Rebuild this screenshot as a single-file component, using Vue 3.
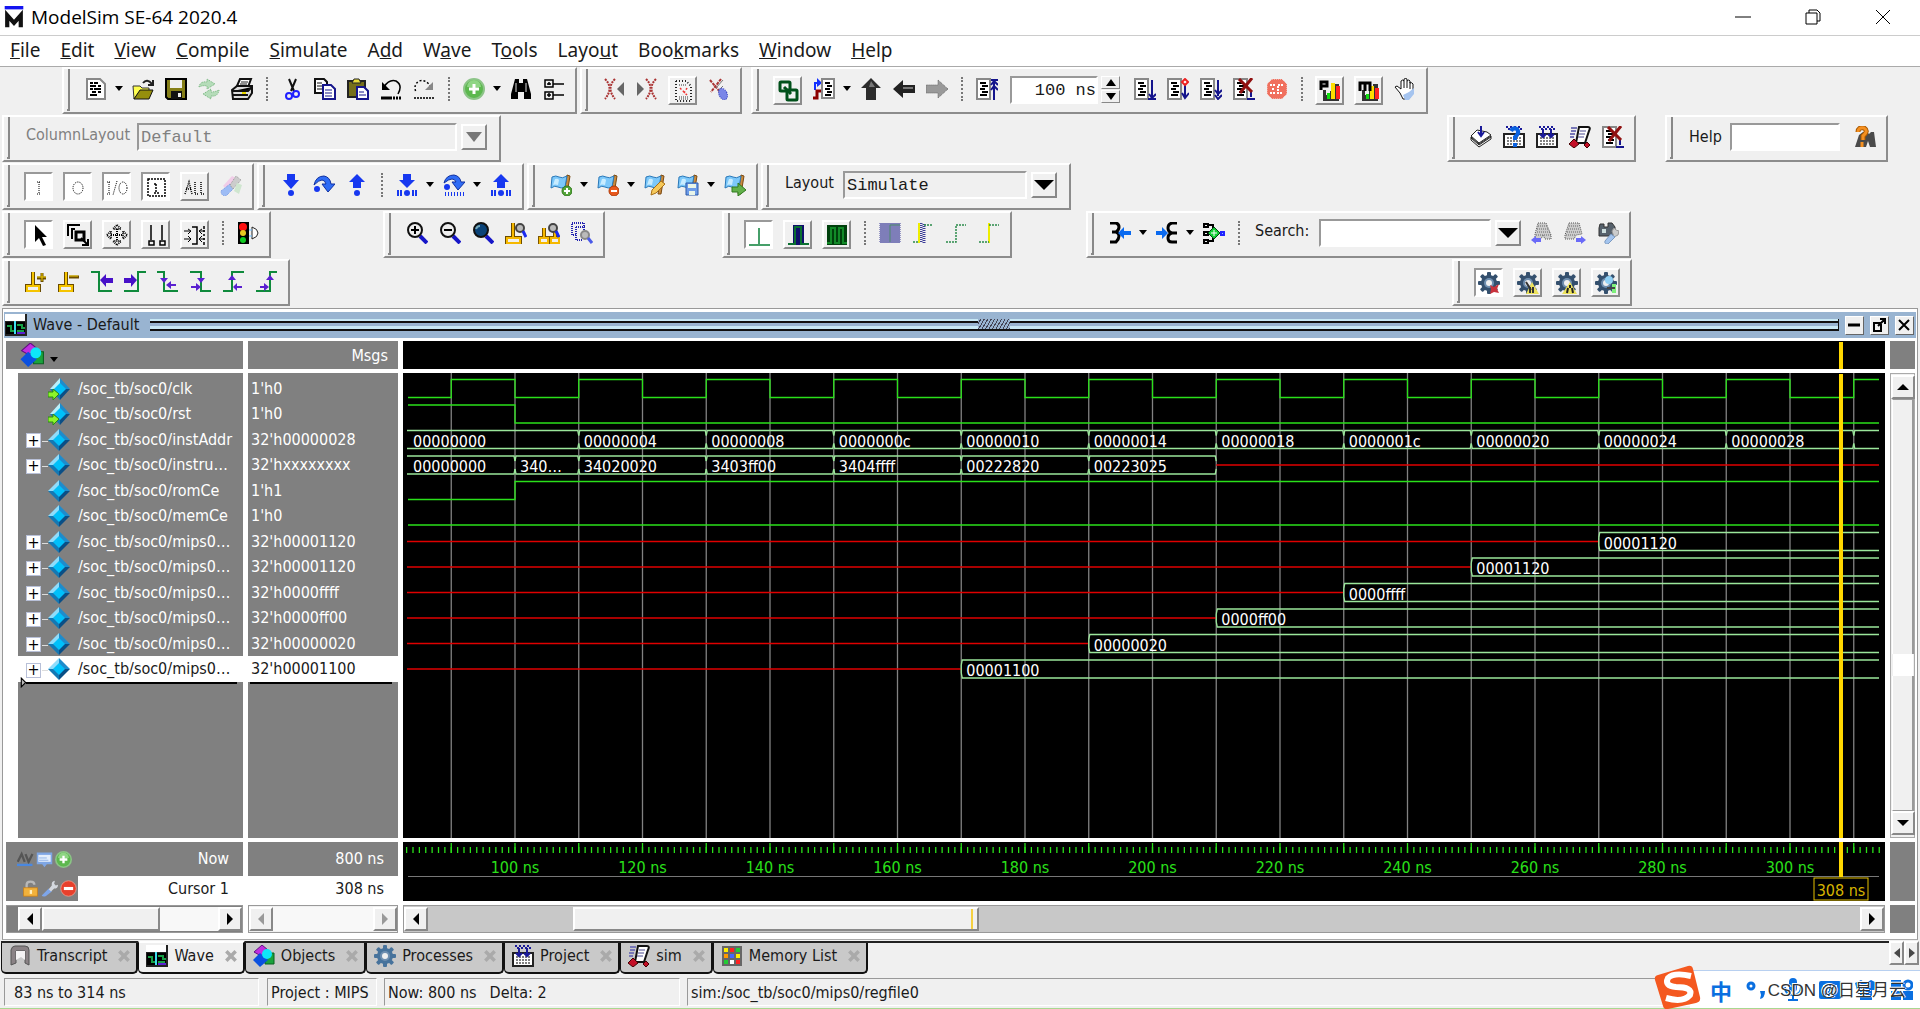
<script setup>
const K = 'fill="none" stroke="#000" stroke-width="2"'
const K1 = 'fill="none" stroke="#000"'

const gear = (fill) =>
  `<g transform="translate(11 11)"><g fill="${fill}">` +
  [0, 45, 90, 135].map((a) => `<rect x="-2" y="-11" width="4" height="22" rx="1" transform="rotate(${a})"/>`).join('') +
  `<circle r="8"/></g><circle r="5" fill="#6f8fb0"/><circle r="3" fill="#f0f0f0"/></g>`
const list = '<path d="M1 1h13v20H1z" fill="#fff" stroke="#888" stroke-width="2"/><path d="M4 5h6M6 8h6M4 11h5M6 14h6M4 17h7" stroke="#000" stroke-width="2"/>'
const flag =
  '<path d="M17 1l3 1-3 18h-3z" fill="#c98a3c" stroke="#7a4a12"/><path d="M2 3q4-2 7 0t8-1l-2 11q-4 2-7 0t-7 1z" fill="#7cc8fa" stroke="#2a78b8"/><path d="M5 5q3-1 4 1l-1 5q-3-1-5 0z" fill="#c8ecff"/>'
const brick = '<path d="M1 8h20v13H1z" fill="#fff" stroke="#222" stroke-width="2"/><path d="M4 12h14M4 15h14M4 18h14" stroke="#000" stroke-dasharray="2 1"/>'
const rain = '<path d="M3 1h16M5 3h14" stroke="#1a1a99" stroke-width="2" stroke-dasharray="2 2"/>'
const lens = (fill, mark) =>
  `<path d="M14 14l7 7" stroke="#1616c8" stroke-width="4"/><circle cx="9" cy="8" r="7" fill="${fill}" stroke="#111" stroke-width="2"/>${mark}`
const stand = (x) => `<path d="M${x + 6} 2v14M${x} 16h12v5h-12z" fill="none" stroke="#6b4c00" stroke-width="4"/><path d="M${x + 6} 2v14M${x} 16h12v5h-12z" fill="#f0f0f0" stroke="#f5c400" stroke-width="2"/>`
const glass = '<circle cx="15" cy="6" r="4" fill="#bbb" stroke="#444" stroke-width="2"/><path d="M18 9l3 6" stroke="#1a2af0" stroke-width="3"/>'
const binoc = '<path d="M5 1h4v4h4V1h4l4 15v5h-7v-7h-6v7H1v-5z"'
const cog = gear('#34506e')

const icons = {
  new: '<path d="M2 1h13l5 5v15H2z" fill="#fff" stroke="#888" stroke-width="2"/><path d="M5 5h3m1 0h4M5 8h6m2 0h3M5 11h3m1 0h7M7 14h4m2 0h3M5 17h7" stroke="#000" stroke-width="2"/>',
  open: '<path d="M1 8h7l2 2h7v3H8l-6 8z" fill="#ffff50" stroke="#333"/><path d="M2 21l6-9h13l-4 9z" fill="#958f0c" stroke="#111"/><path d="M11 5q4-5 9 1M21 2v5h-5" fill="none" stroke="#222" stroke-width="2"/>',
  save: '<path d="M1 1h20v20H3l-2-2z" fill="#857f18" stroke="#000" stroke-width="2"/><path d="M5 2h12v8H5z" fill="#efefef"/><path d="M6 13h11v8H6z" fill="#111"/><path d="M13 15h3v4h-3z" fill="#eee"/>',
  refresh: '<g fill="#b5dcb9" stroke="#6fb277" stroke-dasharray="1 1"><path d="M1 9q1-6 8-5V1l8 5-8 5V8q-4-1-8 1z"/><path d="M21 12q-1 7-8 6v3l-8-5 8-5v3q4 0 8-2z"/></g>',
  print: '<path d="M6 8l3-7h11l-3 8z" fill="#fff" stroke="#111" stroke-width="2"/><path d="M10 4h7M9 6h7" stroke="#222"/><path d="M1 12l5-4h15v7l-4 6H2z" fill="#ddd" stroke="#111" stroke-width="2"/><path d="M2 13h15l4-4M2 17h15" stroke="#111" stroke-width="2"/><path d="M11 14h4v2h-4z" fill="#e8d800"/>',
  cut: '<path d="M8 1l5 12M15 1l-5 12" stroke="#111" stroke-width="2"/><g fill="none" stroke="#2020ff" stroke-width="2"><circle cx="8" cy="18" r="3"/><circle cx="15" cy="16" r="3"/></g>',
  copy: '<path d="M1 1h9l3 3v11H1z" fill="#fff" stroke="#111" stroke-width="2"/><path d="M3 5h5M3 8h6M3 11h6" stroke="#111"/><path d="M9 7h8l4 4v10H9z" fill="#fff" stroke="#16168c" stroke-width="2"/><path d="M11 12h7M11 15h7M11 18h7" stroke="#16168c"/>',
  paste: '<path d="M1 3h17v16H1z" fill="#756f1c" stroke="#222" stroke-width="2"/><path d="M5 5l2-4h5l2 4z" fill="#e6dc3c" stroke="#222"/><path d="M10 9h7l4 4v8H10z" fill="#fff" stroke="#16168c" stroke-width="2"/><path d="M12 14h5M12 17h7" stroke="#16168c"/>',
  undo: `<path d="M4 9q5-8 12-6 7 4 2 13" ${K1} stroke-width="1.5"/><path d="M2 4v8h8z"/><path d="M1 20h11" stroke="#000" stroke-width="3"/><path d="M13 20h8" stroke="#000" stroke-width="3" stroke-dasharray="2 1"/>`,
  redo: `<path d="M18 9q-5-8-12-6-6 4-3 11" ${K1} stroke-width="1.5" stroke-dasharray="2 2"/><path d="M20 4v8h-8z" fill="#888"/><path d="M1 20h20" stroke="#333" stroke-width="2" stroke-dasharray="2 1"/>`,
  add: '<circle cx="11" cy="11" r="10" fill="#5cb84e" stroke="#8cc487" stroke-width="2"/><path d="M4 9a7 7 0 0 1 14 0z" fill="#8fd684"/><path d="M11 6v10M6 11h10" stroke="#fff" stroke-width="3"/>',
  find: `${binoc}/><path d="M6 5v9M16 5v9" stroke="#ddd"/>`,
  expand: `<path d="M2 2h8v7H2zM2 14h8v7H2zM10 6h11M10 17h11M4 6h4M6 4v3M4 17h4M6 15v4" ${K1} stroke-width="1.5"/>`,
  xleft: '<path d="M2 1q9 9 0 20M12 1q-9 9 0 20" fill="none" stroke="#a33" stroke-width="2" stroke-dasharray="2 1"/><path d="M21 4v14l-7-7z" fill="#666"/>',
  xright: '<path d="M10 1q9 9 0 20M20 1q-9 9 0 20" fill="none" stroke="#a33" stroke-width="2" stroke-dasharray="2 1"/><path d="M1 4v14l7-7z" fill="#666"/>',
  ghostdoc: '<path d="M4 1h10l5 5v15H4z" fill="#f4f4f4" stroke="#222" stroke-width="2" stroke-dasharray="1 2"/><path d="M7 5h7M7 17h9M7 19h9" stroke="#333" stroke-dasharray="1 1"/><path d="M8 8l7 7M15 8l-4 7" stroke="#e33" stroke-dasharray="2 2" stroke-width="1.5"/>',
  brushx: '<path d="M2 2l10 12M13 1L3 14" stroke="#a33" stroke-width="2" stroke-dasharray="3 1"/><path d="M8 10l7-8M10 13l5-5" stroke="#777"/><ellipse cx="15" cy="16" rx="4" ry="6" fill="#7a86e8" stroke="#3440c0" stroke-dasharray="1 1" transform="rotate(-25 15 16)"/>',
  link: '<g fill="none" stroke="#00501a" stroke-width="3"><rect x="3" y="2" width="10" height="9" rx="1"/><rect x="10" y="10" width="10" height="10" rx="1"/><path d="M7 7l7 7"/></g>',
  jump: '<path d="M2 12V5h3" fill="none" stroke="#1430ff" stroke-width="2"/><path d="M4 0v9l5-4z" fill="#1430ff"/><path d="M0 20h4v-7h4" fill="none" stroke="#8c0000" stroke-width="3"/><path d="M9 1h12v19H9z" fill="#fff" stroke="#888" stroke-width="2"/><path d="M12 5h5M14 8h5M12 11h5M14 14h5M12 17h6" stroke="#000" stroke-width="2"/>',
  up: '<path d="M11 0l10 10h-5v12H6V10H1z" fill="#2c2c2c"/><path d="M11 3l4 6H9z" fill="#777"/>',
  left: '<path d="M0 11l10-9v5h12v8H10v5z" fill="#222"/><path d="M10 9h10v2H10z" fill="#777"/>',
  right: '<path d="M22 11l-10-9v5H0v8h12v5z" fill="#999" stroke="#666" stroke-dasharray="1 1"/>',
  restart: `${list}<path d="M18 4v18M15 2h7M15 7l3-4 4 4M15 12l3-4 4 4" fill="none" stroke="#14148c" stroke-width="2"/>`,
  run: `${list}<path d="M18 2v18M15 16l3 4 4-4M14 21h8" fill="none" stroke="#14148c" stroke-width="2"/>`,
  runcont: `${list}<path d="M18 7v13M15 15l3 5 4-5" fill="none" stroke="#14148c" stroke-width="2"/><path d="M18 1l3 3-3 3-3-3z" fill="#fff" stroke="#e22" stroke-width="2"/>`,
  runall: `${list}<path d="M18 2v16M15 12l3 4 4-4M15 17l3 4 4-4" fill="none" stroke="#14148c" stroke-width="2"/>`,
  breakx: `${list}<path d="M18 12v7M14 21h8" stroke="#14148c" stroke-width="2"/><path d="M6 1l13 13M19 0L7 15" stroke="#901010" stroke-width="3"/>`,
  stop: '<path d="M6 1h10l5 5v10l-5 5H6l-5-5V6z" fill="#f0705e" stroke="#f0f0f0" stroke-dasharray="1 1"/><path d="M17 7h-5v8h5M4 7h5M6 11h3M4 15h5" fill="none" stroke="#fff" stroke-width="2" stroke-dasharray="2 1"/>',
  perfp: '<path d="M4 10v11h16V4h-5v7h-4v4H7v-5z" fill="#333"/><path d="M8 13h3v6H8z" fill="#1d1"/><path d="M12 3h4v16h-4z" fill="#fd0"/><path d="M17 6h4v13h-4z" fill="#f22"/><path d="M2 10V2h6v4H2" fill="none" stroke="#000" stroke-width="3"/>',
  perfm: '<path d="M4 10v11h16V4h-5v7h-4v4H7v-5z" fill="#333"/><path d="M8 14h3v5H8z" fill="#1d1"/><path d="M12 6h4v13h-4z" fill="#fd0"/><path d="M17 8h4v11h-4z" fill="#f22"/><path d="M2 11V3h10v8M7 3v8" fill="none" stroke="#000" stroke-width="3"/>',
  hand: '<path d="M6 15L1 9l2-1 4 3V3q2-2 3 0V1q2-1 3 0v2q2-2 3 0v2q2-1 3 1v8l-4 7H9z" fill="#fff" stroke="#111"/><path d="M10 3v7M13 3v7M16 4v7" stroke="#111"/><path d="M11 22l-2-5 6-3 5-4v6l-5 6z" fill="#a5c4ef"/>',
  stack: '<path d="M1 14l8 7 12-8v-3L9 18l-8-7z" fill="#fff" stroke="#222"/><path d="M1 10l8 7 12-8-4-3L7 4z" fill="#fff" stroke="#222"/><path d="M1 12l8 7 12-8" fill="none" stroke="#222"/><path d="M11 0v9M8 6l3 4 3-4" fill="none" stroke="#1a1a99" stroke-width="2"/>',
  compq: `${brick}${rain}<path d="M8 5q2-4 6-2 3 4-2 8v3" fill="none" stroke="#0a62e0" stroke-width="4"/><path d="M10 17h4v4h-4z" fill="#0a62e0"/>`,
  comp: `${brick}${rain}<path d="M7 3v8M15 3v8M4 8l3 3 3-3M12 8l3 3 3-3" fill="none" stroke="#1a1a99" stroke-width="2"/>`,
  sim: '<path d="M2 2h6M2 5h5M1 8h5M1 11h4" stroke="#7878b8" stroke-width="2"/><path d="M10 1h9q3 0 1 4l-4 12H7z" fill="#fff" stroke="#111" stroke-width="2"/><path d="M11 5h6M10 8h6M9 11h6" stroke="#4a4a90"/><path d="M5 13l5 5-5 4-5-4z" fill="#c41028" stroke="#400"/><path d="M18 16l3 3-3 3-3-3z" fill="#c41028" stroke="#400"/>',
  helpfind: `<path d="M9 6h4l2 2 2-2h3l2 15h-6l-2-6-2 6H1l4-12z" fill="#4a4a4a"/><path d="M4 6q0-5 6-4 5 3-1 8v4" fill="none" stroke="#a85800" stroke-width="5"/><path d="M4 6q0-5 6-4 5 3-1 8v4M8 16v5" fill="none" stroke="#f59020" stroke-width="3"/>`,
  pi: `<path d="M11 6v12M9 6h4M9 18h4" ${K1} stroke-dasharray="1 1"/>`,
  po: `<ellipse cx="11" cy="12" rx="5" ry="6" ${K1} stroke-dasharray="1 1"/>`,
  pio: `<path d="M3 6v12M1 6h4M1 18h4M11 5L7 19" ${K1} stroke-dasharray="1 1"/><ellipse cx="17" cy="12" rx="4" ry="6" ${K1} stroke-dasharray="1 1"/>`,
  pint: `<path d="M3 3h17v17H3zM11 8v9M9 8h3M9 17h5" ${K1} stroke-width="1.5" stroke-dasharray="2 1"/>`,
  pall: `<path d="M1 18l4-12 3 12M2 13h5M11 6v12h4M17 6v12h4" ${K1} stroke-width="1.5" stroke-dasharray="1 1"/>`,
  brush: '<path d="M3 12L12 2l4 2-9 11z" fill="#f1cde8"/><path d="M1 17l9-7 4 4-8 8q-5 0-5-5z" fill="#9dbcf5" stroke="#7094e0" stroke-dasharray="1 1"/><path d="M10 11l6-9 5 4-8 9z" fill="#ccc" stroke="#999" stroke-dasharray="1 1"/><path d="M17 9l5 2-3 9-5-3z" fill="#cfe6cf"/>',
  stepin: '<path d="M7 0h8v6h4l-8 9-8-9h4z" fill="#1738f0"/><circle cx="11" cy="19" r="3" fill="#1738f0"/>',
  stepover: '<path d="M1 11Q3 2 11 2q6 1 7 8h4l-7 8-6-8h4q-1-4-4-4-3 0-8 5z" fill="#2f6cf5" stroke="#1030a0"/><circle cx="4" cy="15" r="3" fill="#1738f0"/>',
  stepout: '<path d="M11 0l8 8h-4v6H7V8H3z" fill="#1738f0"/><circle cx="11" cy="19" r="3" fill="#1738f0"/>',
  stepinc: '<path d="M7 0h8v6h4l-8 8-8-8h4z" fill="#1738f0"/><circle cx="11" cy="19" r="3" fill="#1738f0"/><path d="M2 16v6M5 16v6M17 16v6M20 16v6" stroke="#1738f0" stroke-width="2"/>',
  stepoverc: '<path d="M1 9Q3 1 11 1q6 1 7 7h4l-7 8-6-8h4q-1-3-4-3-3 0-8 4z" fill="#2f6cf5" stroke="#1030a0"/><circle cx="4" cy="13" r="3" fill="#1738f0"/><path d="M2 20h20" stroke="#1738f0" stroke-width="4" stroke-dasharray="1 2"/>',
  stepoutc: '<path d="M11 0l8 8h-4v6H7V8H3z" fill="#1738f0"/><circle cx="11" cy="19" r="3" fill="#1738f0"/><path d="M2 16v6M5 16v6M17 16v6M20 16v6" stroke="#1738f0" stroke-width="2"/>',
  flagadd: `${flag}<circle cx="17" cy="17" r="5" fill="#55a53a" stroke="#2f7a1c"/><path d="M17 14v6M14 17h6" stroke="#fff" stroke-width="2"/>`,
  flagdel: `${flag}<circle cx="17" cy="17" r="5" fill="#e8581c" stroke="#b03a08"/><path d="M14 17h6" stroke="#fff" stroke-width="2"/>`,
  flagedit: `${flag}<path d="M7 21l1-5 9-9 4 3-9 9z" fill="#f6c95a" stroke="#a87018"/>`,
  flagsave: `${flag}<path d="M9 9h12v12H9z" fill="#6c9be8" stroke="#2c5aa8"/><path d="M11 10h8v4h-8zM12 17h6v4h-6z" fill="#e8f4e8"/>`,
  flaggo: `${flag}<path d="M8 13h6V9l8 7-8 6v-4H8z" fill="#62b04a" stroke="#2f7a1c"/>`,
  pointer: '<path d="M7 1v17l4-4 4 8 3-1-4-8h5z"/>',
  zoommode: `<path d="M1 12V1h12M5 15V5h3" ${K}/><path d="M9 8h8v8H9z" fill="none" stroke="#000" stroke-width="3"/><path d="M14 14l7 7M21 15v6h-6" ${K}/>`,
  pan: `<path d="M11 1l4 4H7zM11 21l4-4H7zM1 11l4-4v8zM21 11l-4-4v8zM11 5v12M5 11h12" ${K} stroke-dasharray="1 1"/>`,
  twocur: `<path d="M6 1v15M17 1v15M4 17h5v4H4zM15 17h5v4h-5z" ${K1} stroke-width="1.5"/>`,
  editmode: `<path d="M8 3h5v17H8M20 2v3M20 18v3" ${K1} stroke-width="1.5"/><path d="M20 6v12" ${K1} stroke-width="1.5" stroke-dasharray="2 2"/><path d="M0 7h6M4 5l3 2-3 3M0 15h6M4 12l3 3-3 3M15 7h6M18 5l-3 2 3 3M15 15h6M18 12l-3 3 3 3" ${K1}/>`,
  traffic: '<path d="M1 0h11v22H1z"/><circle cx="6" cy="5" r="4" fill="#f11"/><circle cx="6" cy="11" r="3" fill="#e8c820"/><circle cx="6" cy="18" r="3" fill="#1c2"/><path d="M15 5q6 2 6 6t-6 6z" fill="#fff" stroke="#222"/><path d="M12 8h3M12 14h3" stroke="#6bf"/>',
  zin: lens('#eee', '<path d="M9 4v8M5 8h8" stroke="#000" stroke-width="2"/>'),
  zout: lens('#eee', '<path d="M5 8h8" stroke="#000" stroke-width="2"/>'),
  zfull: lens('#0a4378', '<path d="M4 7q1-3 4-3" fill="none" stroke="#7ab" stroke-width="2"/>'),
  zcur: '<path d="M8 1v15M2 16h13v5H2z" fill="none" stroke="#6b4c00" stroke-width="4"/><path d="M8 1v15M2 16h13v5H2z" fill="#f0f0f0" stroke="#f5b800" stroke-width="2"/>' + glass,
  ztwo: '<path d="M6 6v10M2 16h8v5H2zM17 8v8M13 16h8v5h-8z" fill="none" stroke="#7a5500" stroke-width="4"/><path d="M6 6v10M2 16h8v5H2zM17 8v8M13 16h8v5h-8z" fill="#f0f0f0" stroke="#f5b800" stroke-width="2"/>' + glass,
  zarea: '<path d="M13 8V1H1v12h4M5 5h9M5 5v13h6" fill="none" stroke="#2424b0" stroke-width="2" stroke-dasharray="1 1"/><circle cx="14" cy="13" r="4" fill="#bbb" stroke="#888" stroke-width="2"/><path d="M17 16l4 5" stroke="#4a5ae8" stroke-width="3"/>',
  w1: '<path d="M11 4v16M1 21h21" stroke="#0a8038" stroke-width="1.5"/>',
  w2: '<path d="M6 1h11v20H6z" fill="#10106c"/><path d="M1 20h7V3h6v17h8" fill="none" stroke="#0a7030" stroke-width="2"/>',
  w3: '<path d="M1 1h20v20H1z" fill="#00400c"/><path d="M1 19h4V4h4v15h4V4h4v15h4" fill="none" stroke="#128a28" stroke-width="2"/>',
  w4: '<path d="M1 1h20v20H1z" fill="#c0c0da"/><path d="M1 1v20M3 1v20M5 1v20M7 1v20M9 1v20M11 1v20M13 1v20M15 1v20M17 1v20M19 1v20M21 1v20" stroke="#3c3c98" stroke-dasharray="1 1"/><path d="M2 2v20M4 2v20M6 2v20M8 2v20M10 2v20M12 2v20M14 2v20M16 2v20M18 2v20M20 2v20" stroke="#3c3c98" stroke-dasharray="1 1"/><path d="M11 20V3h10" fill="none" stroke="#4a8a6a"/>',
  w5: '<path d="M9 1v20M12 2v20" stroke="#3c3c98" stroke-width="3" stroke-dasharray="1 1"/><path d="M7 1v20" stroke="#ee0" stroke-width="2"/><path d="M1 20h6M12 3h9" stroke="#2a8a4a" stroke-width="1.5" stroke-dasharray="2 1"/>',
  w6: '<path d="M1 20h10V3h10" fill="none" stroke="#2a8a4a" stroke-width="1.5" stroke-dasharray="2 1"/>',
  w7: '<path d="M11 1v20" stroke="#ee0" stroke-width="2"/><path d="M1 20h10M11 3h10" stroke="#2a8a4a" stroke-width="1.5" stroke-dasharray="2 1"/>',
  drv: `<path d="M1 1h6q3 1 3 4t-3 5H3h4q3 1 3 4t-3 6H1" ${K1} stroke-width="3"/><path d="M22 9h-7V5l-6 6 6 6v-4h7z" fill="#0a6af0"/>`,
  rdr: `<path d="M21 1h-5q-4 1-4 5t4 5h5h-5q-4 1-4 5t4 4h5" ${K1} stroke-width="3"/><path d="M0 9h6V5l6 6-6 6v-4H0z" fill="#0a6af0"/>`,
  net: `<path d="M1 2h4v3H1zM1 10h4v3H1zM1 18h4v3H1zM5 3h5v16H5M5 11h13" ${K1} stroke-width="2"/><path d="M11 5l6 6-6 6-6-6z" fill="#1c3" stroke="#041"/><path d="M11 8v6M8 11h6" stroke="#fff"/><path d="M18 10h3v3h-3z" fill="#8cf" stroke="#22f" stroke-width="2"/>`,
  sprev: '<path d="M7 1h8l5 12v4h-6l-2-4-2 4H4v-5z" fill="#ccc" stroke="#555" stroke-dasharray="1 1"/><path d="M7 4h9M6 7h12M6 10h13M5 13h15" stroke="#666" stroke-dasharray="1 1"/><path d="M0 18l5-4v2h5v4H5v2z" fill="#6a6af8"/>',
  snext: '<path d="M5 1h10l3 11-6 1-2 4H1v-4z" fill="#ccc" stroke="#555" stroke-dasharray="1 1"/><path d="M5 4h9M4 7h12M3 10h13M2 13h9" stroke="#666" stroke-dasharray="1 1"/><path d="M22 18l-5-4v2h-5v4h5v2z" fill="#6a6af8"/>',
  sopt: `<path d="M3 2h4v3h4V1h4l3 4v9H2V6z" fill="#56616c" stroke="#333"/><path d="M5 7h4v4H5z" fill="#cdd"/><path d="M15 9l2-3 2 2 3 1-1 4-4 2z" fill="#ccc" stroke="#999"/><path d="M8 19l6-7 4 3-7 7q-4 0-3-3z" fill="#a3c4ee" stroke="#7c9ac0"/>`,
  gx: `${cog}<path d="M12 13l4 2 5-3-2 5 2 4-5-1-4 2 1-5z" fill="#c8323c"/>`,
  gw: `${cog}<path d="M15 10l7 12H9z" fill="#ece25a"/><path d="M13 21v-6M16 21v-6M9 10l5 8" stroke="#333" stroke-width="2"/>`,
  gw2: `${cog}<path d="M14 10l7 12H6z" fill="#ece25a"/><path d="M11 21l1-5M17 21l-1-5M14 13v3" stroke="#222" stroke-width="2"/>`,
  gg: `${cog}<circle cx="14" cy="8" r="4" fill="#8fd0f5"/><path d="M17 12h4v9h-4z" fill="#7df07a"/><path d="M12 16h8" stroke="#444" stroke-width="2"/>`,
  cadd: `${stand(2)}<path d="M17 3v9M12 8h9" stroke="#6b4c00" stroke-width="3"/><path d="M17 3v8M12 7h9" stroke="#f0cc00"/>`,
  cdel: `${stand(2)}<path d="M11 7h10" stroke="#6b4c00" stroke-width="3"/><path d="M11 6h9" stroke="#f0cc00"/>`,
  eprev: '<path d="M0 2h8v19h13" fill="none" stroke="#0f8a3c" stroke-width="2"/><path d="M9 10l6-6v4h7v5h-7v4z" fill="#4710c8"/>',
  enext: '<path d="M22 2h-8v19H0" fill="none" stroke="#0f8a3c" stroke-width="2"/><path d="M13 10L7 4v4H0v5h7v4z" fill="#4710c8"/>',
  fprev: '<path d="M0 2h7v19h14" fill="none" stroke="#0f8a3c" stroke-width="2"/><path d="M3 8h8l-4 5zM9 15l5-4v3h5v2h-5v3z" fill="#5a20d0"/>',
  fnext: '<path d="M0 2h11v19h10" fill="none" stroke="#0f8a3c" stroke-width="2"/><path d="M7 8h8l-4 5zM11 17l-5-4v3H1v2h5v3z" fill="#5a20d0"/>',
  rprev: '<path d="M0 21h9V2h12" fill="none" stroke="#0f8a3c" stroke-width="2"/><path d="M5 10h8L9 5zM10 17l4-4v3h5v2h-5v3z" fill="#5a20d0"/>',
  rnext: '<path d="M0 21h14V2h7" fill="none" stroke="#0f8a3c" stroke-width="2"/><path d="M10 10h8l-4-5zM13 17l-5-4v3H4v2h4v3z" fill="#5a20d0"/>',
  wave: '<path d="M0 0h22v22H0z" fill="#222"/><path d="M0 0h20v7H0z" fill="#fff"/><path d="M1 8h19v12H1z" fill="#000"/><path d="M2 12h4v5h3M12 11h5v3h3M12 17h7" fill="none" stroke="#17a045" stroke-width="2"/><path d="M10 7v13" stroke="#3fdcf0" stroke-width="2"/><path d="M12 19h8" stroke="#5a20d0" stroke-width="2"/>',
  objects: '<path d="M9 0l6 5-7 6-7-4z" fill="#c02ee0" stroke="#601080"/><path d="M12 8h9v11h-9z" fill="#1aa33c" stroke="#0a6020"/><path d="M7 8l8 7-8 7-7-7z" fill="#0a50e0"/><circle cx="14" cy="9" r="5" fill="#0ee6f8"/>',
  transcript: '<path d="M2 20V5q1-4 4-4h10q4 0 4 4v15l-4-2V6H7v12z" fill="#8a8285" stroke="#555"/><path d="M7 6h9v9l-4-3-5 3z" fill="#f4f2f3"/>',
  processes: gear('#47739c'),
  memory: '<path d="M1 1h20v20H1z" fill="#666"/><path d="M3 3h4v4H3z" fill="#fe0"/><path d="M9 3h4v4H9z" fill="#f22"/><path d="M15 3h4v4h-4zM3 15h4v4H3z" fill="#2c3"/><path d="M3 9h4v4H3z" fill="#f90"/><path d="M9 9h4v4H9z" fill="#46f"/><path d="M15 9h4v4h-4z" fill="#fe0"/><path d="M9 15h4v4H9z" fill="#fff"/><path d="M15 15h4v4h-4z" fill="#f22"/>',
  diamond: '<path d="M11 0l11 11H11z" fill="#1e8ccc"/><path d="M0 11L11 0v11z" fill="#8fdcfb"/><path d="M0 11h11v11z" fill="#1478b4"/><path d="M22 11H11v11z" fill="#0a4f86"/><path d="M11 5l6 6-6 6-6-6z" fill="#00c0fa"/>',
  input: '<path d="M12 0l10 11H12z" fill="#1e8ccc"/><path d="M2 11L12 0v11z" fill="#b8f0fb"/><path d="M2 11h10v11z" fill="#1478b4"/><path d="M22 11H12v11z" fill="#0a4f86"/><path d="M12 5l6 6-6 6-6-6z" fill="#00c0fa"/><path d="M0 14h5v-3l6 5-6 6v-3H0z" fill="#8df52a" stroke="#2b8a14"/>',
  abmark: '<path d="M1 14L6 4l4 10M11 4l4 10 5-10" fill="none" stroke="#555" stroke-width="3"/><path d="M0 18h20" stroke="#4a88e0" stroke-width="3"/>',
  note: '<path d="M1 2h20v15h-7l-3 4-3-4H1z" fill="#7ea6e4"/><path d="M3 5h16v9H3z" fill="#e4eefc"/><path d="M4 9h10M4 12h12" stroke="#7ea6e4"/>',
  lock: '<path d="M6 11V6q0-4 5-4t5 4" fill="none" stroke="#b8b8b8" stroke-width="3"/><path d="M2 10h18v11H2z" fill="#f2b23c" stroke="#c88018"/><path d="M10 13h3v5h-3z" fill="#fff0c0"/>',
  wrench: '<path d="M1 20l9-9 4 4-8 6q-4 1-5-1z" fill="#7ea6ea"/><path d="M10 12l4-5q-1-5 4-6l-1 4 2 2 3-1q0 5-5 5l-4 4z" fill="#d4d8de"/>',
  remove: '<circle cx="11" cy="11" r="10" fill="#e8402c" stroke="#f0a090"/><path d="M5 11h12" stroke="#fff" stroke-width="4"/>',
}

const toolRows = [
  [
    { cls: 'indent-file', items: ['new', 'v', 'open', 'save', 'refresh', 'print', '|', 'cut', 'copy', 'paste', 'undo', 'redo', '|', 'add', 'v', 'find', 'expand'] },
    { cls: '', items: ['xleft', 'xright', '*ghostdoc', 'brushx'] },
    { cls: 'gap-s', items: ['*link', 'jump', 'v', 'up', 'left', 'right', '|', 'restart', '#time', 'run', 'runcont', 'runall', 'breakx', 'stop', '|', '*perfp', '*perfm', 'hand'] },
  ],
  [
    { cls: '', items: ['#column'] },
    { cls: 'gap-compile', items: ['stack', 'compq', 'comp', 'sim', 'breakx'] },
    { cls: 'gap-m', items: ['#help', 'helpfind'] },
  ],
  [
    { cls: '', items: ['_pi', '_po', '_pio', '_pint', '*pall', 'brush'] },
    { cls: '', items: ['stepin', 'stepover', 'stepout', '|', 'stepinc', 'v', 'stepoverc', 'v', 'stepoutc'] },
    { cls: '', items: ['flagadd', 'v', 'flagdel', 'v', 'flagedit', 'flagsave', 'v', 'flaggo'] },
    { cls: '', items: ['#layout'] },
  ],
  [
    { cls: '', items: ['_pointer', '*zoommode', '*pan', '*twocur', '*editmode', '|', 'traffic'] },
    { cls: 'gap-zoom', items: ['zin', 'zout', 'zfull', 'zcur', 'ztwo', 'zarea'] },
    { cls: 'gap-edges', items: ['_w1', '*w2', '*w3', '|', 'w4', 'w5', 'w6', 'w7'] },
    { cls: 'gap-search', items: ['drv', 'v', 'rdr', 'v', 'net', '|', '#search', 'sprev', 'snext', 'sopt'] },
  ],
  [
    { cls: '', items: ['cadd', 'cdel', 'eprev', 'enext', 'fprev', 'fnext', 'rprev', 'rnext'] },
    { cls: 'gap-gears', items: ['_gx', '*gw', '*gw2', '*gg'] },
  ],
]
const kind = (i) => (i === 'v' ? 'drop' : i === '|' ? 'sep' : i[0] === '#' ? i.slice(1) : 'icon')
const frame = (i) => (i[0] === '*' ? 'raised' : i[0] === '_' ? 'sunken' : '')
const glyph = (i) => icons[i.replace(/^[*_]/, '')]

const menus = [
  ['', 'F', 'ile'], ['', 'E', 'dit'], ['', 'V', 'iew'], ['', 'C', 'ompile'], ['', 'S', 'imulate'], ['A', 'd', 'd'],
  ['W', 'a', 've'], ['T', 'o', 'ols'], ['Layo', 'u', 't'], ['Boo', 'k', 'marks'], ['', 'W', 'indow'], ['', 'H', 'elp'],
]

const signals = [
  { name: '/soc_tb/soc0/clk', value: "1'h0", icon: 'input' },
  { name: '/soc_tb/soc0/rst', value: "1'h0", icon: 'input' },
  { name: '/soc_tb/soc0/instAddr', value: "32'h00000028", bus: true },
  { name: '/soc_tb/soc0/instru…', value: "32'hxxxxxxxx", bus: true },
  { name: '/soc_tb/soc0/romCe', value: "1'h1" },
  { name: '/soc_tb/soc0/memCe', value: "1'h0" },
  { name: '/soc_tb/soc0/mips0…', value: "32'h00001120", bus: true },
  { name: '/soc_tb/soc0/mips0…', value: "32'h00001120", bus: true },
  { name: '/soc_tb/soc0/mips0…', value: "32'h0000ffff", bus: true },
  { name: '/soc_tb/soc0/mips0…', value: "32'h0000ff00", bus: true },
  { name: '/soc_tb/soc0/mips0…', value: "32'h00000020", bus: true },
  { name: '/soc_tb/soc0/mips0…', value: "32'h00001100", bus: true, selected: true },
]

// Time axis: nanoseconds to pixels inside the wave pane.
const x = (t) => 112 + (t - 100) * 6.375
const LEFT = 5
const RIGHT = 1476
const high = (r) => 6.5 + r * 25.5
const low = (r) => 24.5 + r * 25.5
const mid = (r) => 15.5 + r * 25.5
const range = (a, b, s) => Array.from({ length: Math.floor((b - a) / s) + 1 }, (_, i) => a + i * s)
const gridTimes = range(90, 310, 10)
const minorTimes = range(83, 314, 1)
const labelTimes = range(100, 300, 20)

let clk = `M${LEFT} ${low(0)}`
gridTimes.forEach((t) => { clk += `H${x(t)}V${(t / 10) % 2 ? high(0) : low(0)}` })
const scalars = [
  clk + `H${RIGHT}`,
  `M${LEFT} ${high(1)}H${x(100)}V${low(1)}H${RIGHT}`,
  `M${LEFT} ${low(4)}H${x(100)}V${high(4)}H${RIGHT}`,
  `M${LEFT} ${low(5)}H${RIGHT}`,
]
const addrs = ['00000004', '00000008', '0000000c', '00000010', '00000014', '00000018', '0000001c', '00000020', '00000024', '00000028']
const segs = [
  [2, 0, 110, '00000000'],
  ...addrs.map((a, i) => [2, 110 + i * 20, 130 + i * 20, a]),
  [2, 310, 999, ''],
  [3, 0, 100, '00000000'], [3, 100, 110, '340…'], [3, 110, 130, '34020020'], [3, 130, 150, '3403ff00'],
  [3, 150, 170, '3404ffff'], [3, 170, 190, '00222820'], [3, 190, 210, '00223025'],
  [6, 270, 999, '00001120'], [7, 250, 999, '00001120'], [8, 230, 999, '0000ffff'],
  [9, 210, 999, '0000ff00'], [10, 190, 999, '00000020'], [11, 170, 999, '00001100'],
].map(([r, a, b, text]) => {
  const t = high(r)
  const u = low(r)
  const xa = a ? x(a) + 1 : LEFT - 1
  const xb = b < 900 ? x(b) - 1 : RIGHT
  const l = a ? `M${xa - 1} ${t + 5}L${xa} ${t}` : `M${xa} ${t}`
  const m = a ? `M${xa - 1} ${u - 5}L${xa} ${u}` : `M${xa} ${u}`
  const e = b < 900
  return {
    d: `${l}H${xb}${e ? `L${xb + 1} ${t + 5}` : ''}${m}H${xb}${e ? `L${xb + 1} ${u - 5}` : ''}` + (r > 5 ? `M${xa - 1} ${t + 5}V${u - 5}` : ''),
    text, tx: a ? xa + 4 : LEFT + 5, ty: mid(r) + 7,
  }
})
const unknowns = [[3, 210, 999], [6, 0, 270], [7, 0, 250], [8, 0, 230], [9, 0, 210], [10, 0, 190], [11, 0, 170]]
  .map(([r, a, b]) => `M${a ? x(a) : LEFT - 1} ${mid(r)}H${b < 900 ? x(b) : RIGHT}`)

const tabs = [
  ['Transcript', 'transcript'], ['Wave', 'wave'], ['Objects', 'objects'], ['Processes', 'processes'],
  ['Project', 'comp'], ['sim', 'sim'], ['Memory List', 'memory'],
]
</script>

<template>
  <div class="app">
    <header class="titlebar">
      <svg class="logo" viewBox="0 0 22 26"><path d="M0 0h22v4H0z" fill="#1414f0" /><path d="M3 25V11l8 9 8-9v14" fill="none" stroke="#111" stroke-width="5" /></svg>
      <span class="app-name">ModelSim SE-64 2020.4</span>
      <div class="win-buttons">
        <button aria-label="Minimize"><svg viewBox="0 0 16 16"><path d="M0 8h16" /></svg></button>
        <button aria-label="Restore"><svg viewBox="0 0 16 16"><path d="M1 4h11v11H1zM4 4V1h8l3 3v8h-3" /></svg></button>
        <button aria-label="Close"><svg viewBox="0 0 16 16"><path d="M1 1l14 14M15 1L1 15" /></svg></button>
      </div>
    </header>

    <nav class="menubar">
      <button v-for="m in menus" :key="m.join('')">{{ m[0] }}<u>{{ m[1] }}</u>{{ m[2] }}</button>
    </nav>

    <div class="toolbars">
      <div v-for="(row, r) in toolRows" :key="r" class="tool-row">
        <div v-for="(bar, b) in row" :key="b" class="bar" :class="bar.cls">
          <template v-for="(item, i) in bar.items" :key="i">
            <button v-if="kind(item) === 'icon'" class="tool" :class="frame(item)" :aria-label="item.replace(/^[*_]/, '')">
              <svg viewBox="0 0 22 22" v-html="glyph(item)"></svg>
            </button>
            <button v-else-if="kind(item) === 'drop'" class="drop" aria-label="More"></button>
            <span v-else-if="kind(item) === 'sep'" class="sep"></span>
            <div v-else-if="kind(item) === 'time'" class="time">
              <input type="text" value="100 ns" aria-label="Run length">
              <div class="spin"><button aria-label="Increase"></button><button class="down" aria-label="Decrease"></button></div>
            </div>
            <div v-else-if="kind(item) === 'column'" class="field column">
              <label for="column-layout">ColumnLayout</label>
              <select id="column-layout" disabled><option>Default</option></select>
              <button class="pick" disabled aria-label="Open list"></button>
            </div>
            <div v-else-if="kind(item) === 'layout'" class="field layout">
              <label for="layout">Layout</label>
              <select id="layout"><option>Simulate</option></select>
              <button class="pick" aria-label="Open list"></button>
            </div>
            <div v-else-if="kind(item) === 'help'" class="field help">
              <label for="help">Help</label>
              <input id="help" type="text">
            </div>
            <div v-else class="field search">
              <label for="search">Search:</label>
              <input id="search" type="text">
              <button class="pick" aria-label="Open list"></button>
            </div>
          </template>
        </div>
      </div>
    </div>

    <main class="panel">
      <div class="panel-title">
        <svg viewBox="0 0 22 22" v-html="icons.wave"></svg>
        <h1>Wave - Default</h1>
        <div class="groove"><i></i></div>
        <button aria-label="Collapse"><svg viewBox="0 0 16 16"><path d="M2 8h12" stroke="#000" stroke-width="3" /></svg></button>
        <button aria-label="Undock"><svg viewBox="0 0 16 16"><path d="M3 6h7v8H3zM7 9l7-7M9 2h5v5" fill="none" stroke="#000" stroke-width="2" /></svg></button>
        <button aria-label="Close"><svg viewBox="0 0 16 16"><path d="M3 3l10 10M13 3L3 13" stroke="#000" stroke-width="2" /></svg></button>
      </div>

      <div class="wave-grid">
        <div class="gray head-name">
          <svg viewBox="0 0 22 22" v-html="icons.objects"></svg><button class="drop" aria-label="Object filter"></button>
        </div>
        <div class="gray head-value">Msgs</div>
        <div class="black">
          <svg class="plot"><rect :x="x(308) - 2" y="1" width="4" height="27" fill="#ffd700" /></svg>
        </div>
        <div class="gray"></div>

        <div class="gray names">
          <div v-for="(s, i) in signals" :key="i" class="signal" :class="{ selected: s.selected }">
            <span class="tree"><button v-if="s.bus" aria-label="Expand">+</button></span>
            <svg viewBox="0 0 22 22" v-html="icons[s.icon || 'diamond']"></svg>
            <span>{{ s.name }}</span>
          </div>
          <div class="insert"><svg viewBox="0 0 6 10"><path d="M1 1v8l4-4z" fill="#bbb" stroke="#000" /></svg></div>
        </div>
        <div class="gray values">
          <div v-for="(s, i) in signals" :key="i" class="signal" :class="{ selected: s.selected }">{{ s.value }}</div>
          <div class="insert"></div>
        </div>
        <div class="black">
          <svg class="plot">
            <g stroke="#828282"><line v-for="t in gridTimes" :key="t" :x1="x(t)" :x2="x(t)" y1="0" y2="100%" stroke-width="1.3" /></g>
            <g fill="none" stroke="#2ae01a" stroke-width="1.3"><path v-for="(d, i) in scalars" :key="i" :d="d" /></g>
            <g fill="none" stroke="#e00000" stroke-width="1.3"><path v-for="(d, i) in unknowns" :key="i" :d="d" /></g>
            <g fill="none" stroke="#9be69b" stroke-width="1.3"><path v-for="(s, i) in segs" :key="i" :d="s.d" /></g>
            <g fill="#fff"><text v-for="(s, i) in segs" :key="i" :x="s.tx" :y="s.ty">{{ s.text }}</text></g>
            <rect :x="x(308) - 2" y="1" width="4" height="100%" fill="#ffd700" />
          </svg>
        </div>
        <div class="vscroll">
          <button class="arrow up" aria-label="Scroll up"></button>
          <div class="v-thumb"></div><div class="v-track"></div><div class="v-rest"></div>
          <button class="arrow down" aria-label="Scroll down"></button>
        </div>

        <div class="gray cursor-names">
          <div class="cursor-row">
            <span class="mini"><svg v-for="n in ['abmark', 'note', 'add']" :key="n" viewBox="0 0 22 22" v-html="icons[n]"></svg></span>
            <span class="cell">Now</span>
          </div>
          <div class="cursor-row active">
            <span class="mini"><svg v-for="n in ['lock', 'wrench', 'remove']" :key="n" viewBox="0 0 22 22" v-html="icons[n]"></svg></span>
            <span class="cell">Cursor 1</span>
          </div>
        </div>
        <div class="gray cursor-values">
          <div class="cursor-row"><span class="cell">800 ns</span></div>
          <div class="cursor-row active"><span class="cell">308 ns</span></div>
        </div>
        <div class="black">
          <svg class="plot">
            <g stroke="#2ae01a">
              <line v-for="t in minorTimes" :key="t" :x1="x(t)" :x2="x(t)" y1="5" y2="11" stroke-width="1.3" />
              <line v-for="t in gridTimes" :key="t" :x1="x(t)" :x2="x(t)" y1="1" y2="11" stroke-width="1.3" />
            </g>
            <g fill="#2ae01a" text-anchor="middle"><text v-for="t in labelTimes" :key="t" :x="x(t)" y="31">{{ t }} ns</text></g>
            <line :x1="LEFT" :x2="RIGHT" y1="34.5" y2="34.5" stroke="#777" />
            <rect :x="x(308) - 2" y="0" width="4" height="35" fill="#ffd700" />
            <rect :x="x(308) - 27" y="36" width="54" height="22" fill="#000" stroke="#e6c200" />
            <text :x="x(308)" y="54" fill="#d6b400" text-anchor="middle">308 ns</text>
          </svg>
        </div>
        <div class="gray"></div>

        <div class="gray hscroll first">
          <button class="arrow left" aria-label="Scroll left"></button><div class="h-thumb"></div><div class="h-track"></div>
          <button class="arrow right" aria-label="Scroll right"></button>
        </div>
        <div class="hscroll">
          <button class="arrow left" disabled aria-label="Scroll left"></button><div class="h-track"></div>
          <button class="arrow right" disabled aria-label="Scroll right"></button>
        </div>
        <div class="hscroll wide">
          <button class="arrow left" aria-label="Scroll left"></button><div class="h-before"></div><div class="h-thumb"><i></i></div><div class="h-after"></div>
          <button class="arrow right" aria-label="Scroll right"></button>
        </div>
        <div class="gray"></div>
      </div>
    </main>

    <div class="tabs">
      <div class="tab-list">
        <button v-for="t in tabs" :key="t[0]" class="tab" :class="{ active: t[0] === 'Wave' }">
          <svg viewBox="0 0 22 22" v-html="icons[t[1]]"></svg><span>{{ t[0] }}</span>
          <svg class="x" viewBox="0 0 12 12"><path d="M2 2l8 8M10 2l-8 8" stroke="#aaa" stroke-width="3" /></svg>
        </button>
      </div>
      <button class="arrow left page" aria-label="Previous tab"></button>
      <button class="arrow right page" aria-label="Next tab"></button>
    </div>

    <footer class="status">
      <span class="s-range">83 ns to 314 ns</span>
      <span class="s-project">Project : MIPS</span>
      <span class="s-now"><span>Now: 800 ns</span><span>Delta: 2</span></span>
      <span class="s-path">sim:/soc_tb/soc0/mips0/regfile0</span>
    </footer>

    <div class="ime">
      <svg class="sogou" viewBox="0 0 48 46">
        <path d="M4 11L34 2q4-1 5 3l7 28q1 5-4 6L14 45q-4 1-5-3L1 16q-1-4 3-5z" fill="#f4581f" />
        <path d="M37 12Q20 8 14 14q-4 8 8 9 17 0 14 8-7 8-24 3" fill="none" stroke="#fff" stroke-width="6" />
      </svg>
      <span class="zh">中</span>
      <svg viewBox="0 0 22 24"><circle cx="5" cy="8" r="3" fill="none" stroke="#0a6fe0" stroke-width="3" /><path d="M14 13h5q0 7-5 8l1-4z" fill="#0a6fe0" /></svg>
      <svg viewBox="0 0 22 24"><rect x="7" y="0" width="8" height="14" rx="4" fill="#0a6fe0" /><path d="M3 9q0 8 8 8t8-8M11 17v5M6 22h10" fill="none" stroke="#0a6fe0" stroke-width="2" /></svg>
      <svg viewBox="0 0 22 24"><rect x="0" y="3" width="22" height="18" rx="2" fill="#0a6fe0" /><path d="M4 8h14M4 12h14M7 17h8" stroke="#fff" stroke-width="2" stroke-dasharray="2 2" /></svg>
      <svg viewBox="0 0 22 24"><path d="M0 5l6-3q5 4 10 0l6 3-2 7h-3v10H5V12H2z" fill="#0a6fe0" /></svg>
      <svg viewBox="0 0 22 24"><path d="M1 3h8v7H1zM1 14h8v7H1zM13 14h8v7h-8z" fill="#0a6fe0" stroke="#0a6fe0" stroke-width="2" /><circle cx="17" cy="7" r="4" fill="none" stroke="#0a6fe0" stroke-width="3" /></svg>
      <span class="watermark">CSDN @日星月云</span>
    </div>
  </div>
</template>

<style>
body { margin: 0; background: #f0f0f0; }
</style>

<style scoped>
.app {
  position: relative; display: flex; flex-direction: column; min-height: 100vh; overflow: hidden;
  background: #f0f0f0; color: #1a1a1a; font: 16px/20px "DejaVu Sans Condensed", "Noto Sans", sans-serif;
}
.app *, .app *::before { box-sizing: border-box; }
button, input, select { font: inherit; color: inherit; padding: 0; margin: 0; border: 0; border-radius: 0; background: none; outline: 0; }
svg { display: block; flex: none; }

.titlebar { display: flex; align-items: center; height: 35px; padding: 0 2px 2px 3px; background: #fff; font-family: "Open Sans", "Noto Sans", sans-serif; font-size: 19px; color: #000; }
.logo { width: 22px; height: 22px; margin-right: 6px; }
.app-name { flex: 1; }
.win-buttons { display: flex; }
.win-buttons button { width: 70px; height: 33px; display: grid; place-items: center; }
.win-buttons svg { width: 16px; height: 16px; fill: none; stroke: #000; stroke-width: 1; }

.menubar { display: flex; gap: 20px; align-items: center; height: 31px; padding: 0 10px 3px; background: #fff; border-top: 1px solid #ccc; font-family: "Noto Sans", sans-serif; font-size: 19px; }

.toolbars { border-top: 1px solid #aaa; display: flex; flex-direction: column; gap: 1px; }
.tool-row { display: flex; gap: 3px; height: 47px; padding-left: 2px; }
.bar { display: flex; align-items: center; flex: none; padding: 0 5px 4px 0; border: 2px solid #8c8c8c; border-top-color: #fff; border-left-color: #fff; }
.bar::before { content: ""; width: 3px; height: 42px; margin: 3px 9px 0 3px; border: solid #888; border-width: 0 2px 2px 0; }
.indent-file { margin-left: 60px; }
.gap-s { margin-left: 6px; }
.gap-m { margin-left: 26px; }
.gap-zoom { margin-left: 109px; }
.gap-edges { margin-left: 114px; }
.gap-search { margin-left: 71px; }
.gap-compile { margin-left: 943px; }
.gap-gears { margin-left: 1159px; }
.tool { width: 33px; height: 30px; display: grid; place-items: center; }
.tool svg { width: 22px; height: 22px; }
.raised, .sunken { width: 29px; height: 29px; margin: 4px 5px 0; border: 2px solid; }
.raised { border-color: #fff #8c8c8c #8c8c8c #fff; }
.sunken { border-color: #999 #fff #fff #999; background: #fff; }
.drop { width: 14px; height: 22px; display: grid; place-items: center; }
.drop::before { content: ""; border: 4px solid transparent; border-top: 5px solid #000; border-bottom: 0; }
.sep { width: 17px; height: 24px; display: grid; justify-items: center; }
.sep::before { content: ""; width: 0; height: 24px; border-left: 2px dotted #777; }

.time { display: flex; gap: 3px; width: 125px; padding: 3px 0 0 7px; }
.time input, .field input, .field select { height: 28px; border: 2px solid; border-color: #999 #fff #fff #999; font-family: "Liberation Mono", monospace; font-size: 17px; appearance: none; }
.time input { width: 88px; background: #fff; text-align: right; }
.spin { display: flex; flex-direction: column; gap: 1px; width: 19px; }
.spin button { height: 13px; border: 1px solid; border-color: #fff #888 #888 #fff; display: grid; place-items: center; }
.spin button::before { content: ""; border: 5px solid transparent; border-bottom: 7px solid #000; border-top: 0; }
.spin .down::before { border-bottom: 0; border-top: 7px solid #000; }
.field { display: flex; align-items: center; }
.field label { padding-bottom: 4px; }
.field select { padding: 2px 0 0 2px; background: #f0f0f0; opacity: 1; }
.field input { background: #fff; }
.pick { width: 26px; height: 26px; margin-left: 4px; border: 2px solid; border-color: #fff #888 #888 #fff; display: grid; place-items: center; }
.pick::before { content: ""; border: 10px solid transparent; border-top: 10px solid #000; border-bottom: 0; }
.pick:disabled::before { border-width: 10px 8px 0; border-top-color: #777; }
.column { color: #808080; padding: 0 7px; }
.column label { width: 111px; }
.column select { width: 320px; }
.layout { padding: 0 7px; }
.layout label { width: 58px; }
.layout select { width: 184px; }
.help { padding: 0 8px 0 7px; }
.help label { width: 41px; padding-bottom: 0; }
.help input { width: 110px; }
.search { padding: 0 4px 0 8px; }
.search label { width: 64px; }
.search input { width: 172px; }

.panel { flex: 1; display: flex; flex-direction: column; margin: 2px 2px 0; padding: 3px 1px 6px; background: #fff; border: 1px solid #999; border-bottom-color: #aaa; }
.panel-title { display: flex; align-items: center; gap: 6px; height: 26px; padding: 0 2px 0 1px; background: #99b4d1; }
.panel-title > svg { width: 22px; height: 22px; }
.panel-title h1 { margin: 0 5px 0 0; font-size: 16px; line-height: 20px; font-weight: 400; }
.groove { flex: 1; height: 12px; border: solid #111; border-width: 0 1px 2px 0; display: grid; place-items: center; background: linear-gradient(#c8e8f5 0 2px, #111 2px 4px, #99b4d1 4px 7px, #c8e8f5 7px 10px); }
.groove i { width: 32px; height: 10px; background: repeating-linear-gradient(120deg, #99b4d1 0 2px, #445 2px 3px); }
.panel-title button { width: 19px; height: 19px; background: #f0f0f0; border: 1px solid; border-color: #fff #666 #666 #fff; }
.panel-title button svg { width: 16px; height: 16px; }

.wave-grid { flex: 1; display: grid; grid-template: 28px minmax(320px, 1fr) 59px 28px / 237px 150px minmax(0, 1fr) 25px; gap: 4px 5px; margin: 3px 1px 0 2px; }
.gray { background: #808080; color: #fff; }
.black { background: #000; overflow: hidden; position: relative; }
.plot { position: absolute; inset: 0; width: 100%; height: 100%; font-size: 16px; }
.head-name { display: flex; align-items: center; padding-left: 14px; }
.head-name svg { width: 25px; height: 24px; }
.head-name .drop { width: 18px; margin-top: 8px; }
.head-value { padding: 5px 10px 0 0; text-align: right; }
.names { border-left: 12px solid #fff; padding-top: 3px; }
.values { padding-top: 3px; }
.names, .values { display: grid; grid-template-rows: 25px 26px 25px 26px 25px 26px 25px 26px 25px 26px 25px 26px 2px; align-content: start; white-space: nowrap; overflow: hidden; }
.names .signal { display: flex; align-items: center; padding-left: 8px; }
.names .signal > svg { width: 22px; height: 22px; margin-right: 8px; }
.tree { width: 22px; height: 22px; display: flex; align-items: center; background: linear-gradient(#ddd, #ddd) 16px 12px / 6px 1px no-repeat; }
.tree:not(:has(button)) { background: none; }
.tree button { width: 15px; height: 15px; margin-top: 2px; background: #fff; border: 1px solid #b8c0d8; color: #000; font-size: 16px; line-height: 12px; }
.values .signal { display: flex; align-items: center; padding-left: 3px; }
.selected { background: #fff; color: #1a1a1a; }
.insert { height: 2px; margin: 0 6px 0 8px; background: #000; position: relative; }
.values .insert { margin: 0 6px 0 2px; }
.insert svg { position: absolute; left: -6px; top: -5px; width: 7px; height: 11px; }

.arrow { width: 24px; height: 24px; flex: none; background: #f0f0f0; border: 2px solid; border-color: #fff #888 #888 #fff; display: grid; place-items: center; }
.arrow::before { content: ""; border: 6px solid transparent; }
.arrow.left::before { border-right-color: #000; border-left: 0; }
.arrow.right::before { border-left-color: #000; border-right: 0; }
.arrow.up::before { border-bottom-color: #000; border-top: 0; }
.arrow.down::before { border-top-color: #000; border-bottom: 0; }
.arrow.left:disabled::before { border-right-color: #999; }
.arrow.right:disabled::before { border-left-color: #999; }
.vscroll { display: flex; flex-direction: column; align-items: center; padding: 1px 1px 2px; background: #f0f0f0; border: 1px solid #aaa; }
.v-thumb, .v-rest { width: 22px; border-right: 2px solid #999; border-left: 1px solid #fff; background: #f0f0f0; }
.v-thumb { flex: 256; border-top: 1px solid #999; }
.v-track { flex: 22; width: 20px; background: #fff; }
.v-rest { flex: 135; border-bottom: 1px solid #999; }
.hscroll { display: flex; align-items: center; background: #f0f0f0; border: 1px solid #999; }
.hscroll.first { padding-left: 11px; background: #808080; }
.hscroll .h-track { flex: 1; height: 24px; background: #f8f8f8; }
.hscroll .h-thumb { height: 24px; background: #f0f0f0; border: 2px solid; border-color: #fff #888 #888 #fff; }
.first .h-thumb { width: 118px; }
.wide { background: #c8c8c8; }
.wide .h-before { flex: 145; }
.wide .h-thumb { flex: 398; padding-right: 4px; }
.wide .h-thumb i { display: block; margin-left: auto; width: 2px; height: 20px; background: #f5d040; }
.wide .h-after { flex: 881; }

.cursor-names, .cursor-values { display: grid; grid-template-rows: 34px 25px; }
.cursor-row { display: flex; }
.mini { display: flex; align-items: center; justify-content: flex-end; gap: 2px; width: 72px; padding-right: 1px; }
.mini svg { width: 17px; height: 17px; }
.cursor-row:first-child .mini { padding-right: 6px; }
.cell { flex: 1; display: flex; align-items: center; justify-content: flex-end; padding-right: 14px; }
.active .cell { background: #fff; color: #1a1a1a; }

.tabs { display: flex; align-items: flex-start; height: 36px; padding: 1px 1px 0; }
.tab-list { flex: 1; display: flex; border-top: 2px solid #222; }
.tab { display: flex; align-items: center; height: 31px; gap: 6px; padding: 0 5px 3px 7px; background: #c9c9c9; border: 1px solid #111; border-width: 0 2px 2px 1px; border-radius: 0 0 5px 5px; }
.tab svg { width: 22px; height: 22px; }
.tab .x { width: 14px; height: 14px; margin-left: 4px; }
.tab.active { background: #f0f0f0; margin-top: -2px; height: 33px; border-top: 2px solid #fff; }
.arrow.page { width: 15px; height: 24px; }
.arrow.page::before { border-width: 5px 6px; opacity: .7; }

.status { display: flex; height: 33px; padding: 2px 0 2px 4px; border-bottom: 1px solid #a8d890; }
.status > span { display: flex; align-items: center; height: 28px; padding: 2px 0 0 3px; border: 1px solid; border-color: #999 #fff #fff #999; white-space: nowrap; }
.status .s-range { width: 255px; margin-right: 8px; padding-left: 9px; }
.s-project { width: 110px; margin-right: 7px; }
.s-now { width: 296px; margin-right: 7px; gap: 13px; }
.s-path { flex: 1; }

.ime { position: absolute; right: 0; bottom: 1px; display: flex; align-items: center; justify-content: space-between; width: 230px; height: 38px; padding: 0 7px 0 20px; background: #fff; border-top: 1px solid #b8d0f0; }
.ime svg { width: 22px; height: 24px; }
.ime .sogou { position: absolute; left: -36px; top: -7px; width: 48px; height: 46px; }
.zh { color: #0a6fe0; font: 700 22px/24px "Noto Sans CJK SC", sans-serif; }
.watermark { position: absolute; right: 14px; top: 8px; font: 17px/24px "Liberation Sans", "Noto Sans CJK SC", sans-serif; color: #333; text-shadow: -1px -1px 0 #fff, 1px 0 0 #fff; white-space: nowrap; }
</style>
